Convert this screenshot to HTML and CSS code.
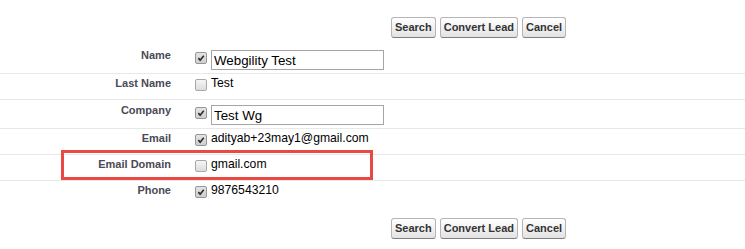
FILE: index.html
```html
<!DOCTYPE html>
<html lang="en">

<head>
    <meta charset="UTF-8">
    <title>Convert Lead</title>
    <link rel="stylesheet" href="styles.css">
</head>

<body>
    <div class="page">
        <div class="btn-bar">
            <button class="btn">Search</button>
            <button class="btn">Convert Lead</button>
            <button class="btn">Cancel</button>
        </div>

        <div class="detail-list">
            <div class="row row-input">
                <div class="label">Name</div>
                <div class="value">
                    <span class="check checked"><svg viewBox="0 0 12 12"><path d="M2.8 6.2 L5 8.6 L9.3 3.3" /></svg></span>
                    <input class="field" type="text" value="Webgility Test">
                </div>
            </div>
            <div class="row">
                <div class="label">Last Name</div>
                <div class="value">
                    <span class="check"></span>
                    <span class="text">Test</span>
                </div>
            </div>
            <div class="row row-input">
                <div class="label">Company</div>
                <div class="value">
                    <span class="check checked"><svg viewBox="0 0 12 12"><path d="M2.8 6.2 L5 8.6 L9.3 3.3" /></svg></span>
                    <input class="field" type="text" value="Test Wg">
                </div>
            </div>
            <div class="row">
                <div class="label">Email</div>
                <div class="value">
                    <span class="check checked"><svg viewBox="0 0 12 12"><path d="M2.8 6.2 L5 8.6 L9.3 3.3" /></svg></span>
                    <span class="text">adityab+23may1@gmail.com</span>
                </div>
            </div>
            <div class="row">
                <div class="label">Email Domain</div>
                <div class="value">
                    <span class="check"></span>
                    <span class="text">gmail.com</span>
                </div>
            </div>
            <div class="row last">
                <div class="label">Phone</div>
                <div class="value">
                    <span class="check checked"><svg viewBox="0 0 12 12"><path d="M2.8 6.2 L5 8.6 L9.3 3.3" /></svg></span>
                    <span class="text">9876543210</span>
                </div>
            </div>
        </div>

        <div class="btn-bar bottom">
            <button class="btn">Search</button>
            <button class="btn">Convert Lead</button>
            <button class="btn">Cancel</button>
        </div>

        <!-- annotation box -->
        <div class="highlight"></div>
    </div>
</body>

</html>
```

FILE: styles.css
```css
body {
    margin: 0;
    font-family: "Liberation Sans", Arial, sans-serif;
    background: white;
    color: #000;
}

.page {
    position: relative;
    width: 745px;
    height: 249px;
    overflow: hidden;
}

.btn-bar {
    display: flex;
    gap: 4px;
    padding: 17px 0 0 391px;
    margin-bottom: 7px;
}

.btn-bar.bottom {
    padding-top: 11px;
    margin-bottom: 0;
}

.btn {
    font-family: "Liberation Sans", Arial, sans-serif;
    font-size: 11px;
    font-weight: bold;
    line-height: 15px;
    color: #333;
    padding: 2px 3px;
    margin: 0;
    border: 1px solid #b5b5b5;
    border-bottom-color: #7f7f7f;
    border-radius: 3px;
    background: linear-gradient(#ffffff, #f1f1f1 50%, #e3e3e3);
}

.row {
    display: grid;
    grid-template-columns: 171px 1fr;
    height: 26px;
    box-sizing: border-box;
    border-bottom: 1px solid #e8e8e8;
}

.row.row-input {
    height: 29px;
}

.row.last {
    border-bottom: none;
}

.label {
    text-align: right;
    font-size: 11px;
    font-weight: bold;
    line-height: 16px;
    color: #4a4a56;
    padding-top: 1px;
}

.row-input .label {
    padding-top: 2px;
}

.value {
    display: flex;
    align-items: flex-start;
    padding-left: 24px;
}

.check {
    width: 12px;
    height: 12px;
    box-sizing: border-box;
    margin-top: 5px;
    margin-right: 4px;
    border: 1px solid #a8a8a8;
    border-radius: 2px;
    background: linear-gradient(#f6f6f6, #dcdcdc);
    flex-shrink: 0;
}

.check.checked {
    border-color: #969696;
    background: linear-gradient(#e4e4e4, #cfcfcf);
}

.row-input .check {
    margin-top: 7px;
}

.check svg {
    display: block;
    width: 10px;
    height: 10px;
}

.check svg path {
    fill: none;
    stroke: #2e2e2e;
    stroke-width: 2;
}

.text {
    font-size: 12.2px;
    line-height: 16px;
    padding-top: 1px;
}

.field {
    width: 173px;
    height: 20px;
    box-sizing: border-box;
    margin: 5px 0 0;
    padding: 0 2px;
    border: 1px solid #a5a5a5;
    font-family: "Liberation Sans", Arial, sans-serif;
    font-size: 13.33px;
    color: #000;
    background: white;
}

.highlight {
    position: absolute;
    left: 61px;
    top: 150px;
    width: 312px;
    height: 30px;
    box-sizing: border-box;
    border: 3px solid #e84a43;
}
```
